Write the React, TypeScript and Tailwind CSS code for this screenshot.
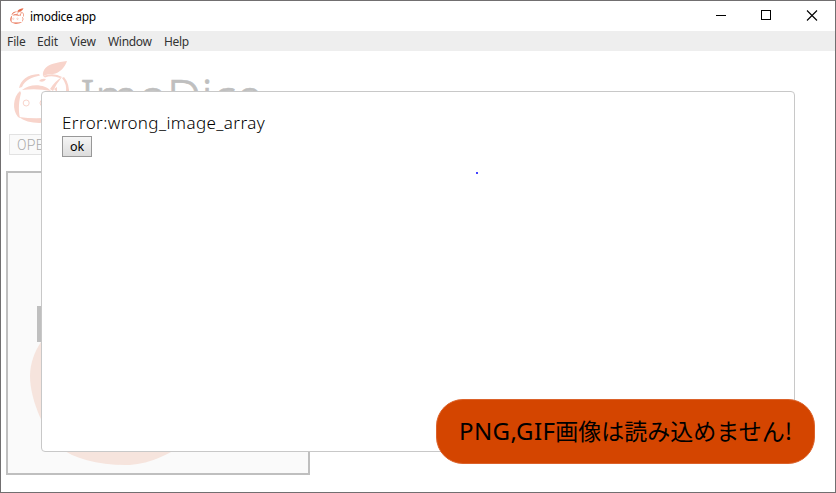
function LogoMark({ className }: { className: string }) {
  return (
    <svg viewBox="0 0 58 64" className={className} fill="currentColor" aria-hidden="true">
      <path d="M31 16C30 10 35 5 42 3.5Q48 1.5 55 1C53 7 48 13 41 14Q35 14 31 16Z" />
      <path d="M7 28C9 20 15 14.500 27 14L28 15.500C20 17 13 20 10 27Z" />
      <path d="M31 16Q42 12 50 17L48 18Q40 15 33 17.500Z" />
      <path d="M52 17Q58 24 57 36L54 32Q55 24 50 18Z" />
      <path d="M10 30C18 23 33 24 39 31Q25 28 10 30Z" />
      <path d="M38 29Q43 21 50 17Q44 24 41 31Z" />
      <path d="M8 31C1 37 0 50 6 57L8 58C6 49 7 41 9 33Z" />
      <path d="M7 57Q27 60 49 56C40 65 16 65 7 57Z" />
      <path d="M52 36Q58 44 52 54L50 53Q54 43 50 36Z" />
      <path d="M27 21Q29 18 34 19Q32 23 27 21Z" />
      <path d="M42 29L45 27L45 32Z" />
      <circle cx="14.200" cy="43" r="3" fill="none" stroke="currentColor" strokeWidth="1" />
      <circle cx="31" cy="43" r="3" fill="none" stroke="currentColor" strokeWidth="1" />
    </svg>
  );
}

function TitleBar() {
  return (
    <header className="flex h-[30px] items-center bg-white">
      <LogoMark className="ml-2 h-4 w-4 text-[#e86b4b]" />
      <h1 className="ml-[5px] grow pt-px text-[12px] tracking-[-0.3px] text-black">imodice app</h1>
      <svg width="146" height="30" viewBox="0 0 146 30" fill="none" stroke="black" aria-hidden="true">
        <path d="M27 14.5H37M72.5 9.5H81.5V18.5H72.5Z" shapeRendering="crispEdges" />
        <path d="M118 9.5L128 19.5M128 9.5L118 19.5" strokeWidth="1.1" />
      </svg>
    </header>
  );
}

function MenuBar() {
  return (
    <nav className="flex h-5 items-center bg-[#eee] pt-0.5 pl-1.5 text-[12px] tracking-[-0.1px] text-[#333]">
      <span className="w-[30px]">File</span>
      <span className="w-[33px]">Edit</span>
      <span className="w-[38px]">View</span>
      <span className="w-14 tracking-[-0.3px]">Window</span>
      <span className="tracking-[-0.3px]">Help</span>
    </nav>
  );
}

export default function App() {
  return (
    <div className="relative flex h-[493px] w-[836px] flex-col overflow-hidden border border-[#716f70] bg-white font-['Noto_Sans','Noto_Sans_CJK_JP',sans-serif]">
      <TitleBar />
      <MenuBar />
      <main className="flex grow flex-col items-start">
        <div className="flex h-[83px] pt-[9px]">
          <LogoMark className="ml-[11px] h-16 w-[58px] text-[#f8d4cb]" />
          <h2 className="ml-2.5 pt-[3px] text-[48px] leading-[66px] font-light tracking-[0.3px] text-[#bfbfbf] [-webkit-text-stroke:0.7px_#bfbfbf]">ImoDice</h2>
        </div>
        <button className="ml-2 h-[21px] w-[70px] border border-[#e2e2e2] bg-[#fafafa] pl-[7px] text-left font-['Roboto',sans-serif] text-[14px] leading-[18px] font-light tracking-[0.3px] text-[#aaa]">
          OPEN
        </button>
        <div className="mt-4 ml-[5px] h-[304px] w-[304px] overflow-hidden border-2 border-[#bfbfbf] bg-[#fafafa]">
          <svg viewBox="0 0 300 300" aria-hidden="true">
            <path d="M22 203C22 190 27 178 33 169C45 152 55 148 70 148H180C205 155 218 180 216 210C210 255 158 292 118 292C88 292 66 285 52 275C38 262 22 228 22 203Z" fill="#f6e4dd" />
            <path d="M29 133H70V169H29Z" fill="#bfbfbf" />
          </svg>
        </div>
      </main>
      <section role="dialog" className="absolute top-[90px] left-10 flex h-[361px] w-[754px] flex-col items-start rounded-[4px] border border-[#c8c8c8] bg-white px-5 pt-[19px]">
        <p className="h-[25px] text-[17px] leading-6 font-light tracking-[0.4px] whitespace-nowrap text-black">Error:wrong_image_array</p>
        <button className="h-[21px] w-[30px] border border-[#989898] bg-linear-to-b from-[#f5f5f5] to-[#dddddd] text-[12.500px] leading-[18px] text-black">ok</button>
        <i className="mt-[15px] ml-[414px] h-0.5 w-0.5 bg-[#4444ff]" />
      </section>
      <aside className="absolute top-[398px] left-[435px] flex h-[65px] w-[379px] items-center rounded-[27px] border border-[#dc622a] bg-[#d44500] pl-[22px] font-['Noto_Sans_CJK_JP',sans-serif] text-[23px] leading-none whitespace-nowrap text-black">
        <p className="pb-0.5">
          <span className="font-['Noto_Sans',sans-serif] text-[24px] tracking-[0.4px]">PNG,GIF</span>画像は読み込めません!
        </p>
      </aside>
    </div>
  );
}
